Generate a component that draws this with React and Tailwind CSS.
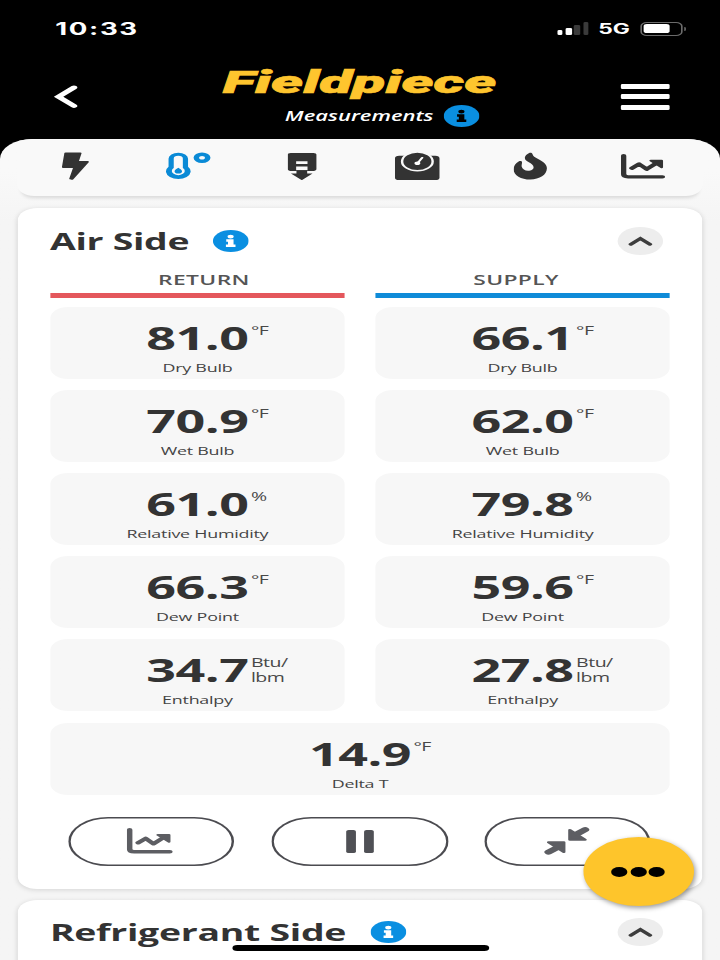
const airSide = [
  { label: "Dry Bulb", unit: "°F", ret: "81.0", sup: "66.1" },
  { label: "Wet Bulb", unit: "°F", ret: "70.9", sup: "62.0" },
  { label: "Relative Humidity", unit: "%", ret: "61.0", sup: "79.8" },
  { label: "Dew Point", unit: "°F", ret: "66.3", sup: "59.6" },
  { label: "Enthalpy", unit: "Btu/ lbm", ret: "34.7", sup: "27.8" },
];

function InfoIcon({ dark }) {
  return (
    <svg viewBox="0 0 22 22" className="h-[22px] w-[22px] shrink-0">
      <circle cx="11" cy="11" r="11" fill="#0a8fe1" />
      <g fill={dark ? "#000" : "#fff"}>
        <circle cx="10.9" cy="6.6" r="1.9" />
        <path d="M8.2 9.3h4.5v5.3h1.2v2.4H8v-2.4h1.3v-2.9H8.2z" />
      </g>
    </svg>
  );
}

function BoltIcon() {
  return (
    <svg viewBox="0 0 17 28" className="h-7 w-[17px]">
      <path
        d="M2.4 1.2h9L9.6 9.8h6.3L6.3 27l-.9-.4L7.9 15.2H.9z"
        fill="#333"
        stroke="#333"
        strokeWidth="1.6"
        strokeLinejoin="round"
      />
    </svg>
  );
}

function ThermometerIcon() {
  return (
    <svg viewBox="0 0 28 28" className="h-7 w-7">
      <path
        d="M1.7 6.8a6 6 0 0 1 12 0v8a7.6 7.6 0 1 1-12 0z"
        fill="#0a8ad6"
      />
      <path
        d="M4.9 6.6a2.8 2.8 0 0 1 5.6 0v9.5a4 4 0 1 1-5.6 0z"
        fill="#f9f9f9"
      />
      <path d="M7.7 15.8c.8 1 2.3 1.9 2.3 3.5a2.3 2.3 0 0 1-4.6 0c0-1.6 1.5-2.5 2.3-3.5z" fill="#0a8ad6" />
      <circle cx="22.3" cy="5.7" r="3.5" fill="none" stroke="#0a8ad6" strokeWidth="3.4" />
    </svg>
  );
}

function FilterIcon() {
  return (
    <svg viewBox="0 0 18 28" className="h-7 w-[18px]">
      <rect width="17.7" height="18" y="0.9" rx="1.8" fill="#333" />
      <path d="M5.2 9.3h7V12h-7zM5.2 14.6h7v3.6h-7z" fill="#f9f9f9" />
      <path d="M5.4 18.2h6.6v3.2h3.3L8.7 28.2 2 21.4h3.4z" fill="#333" />
    </svg>
  );
}

function GaugeIcon() {
  return (
    <svg viewBox="0 0 28 28" className="h-7 w-7">
      <rect y="3.8" width="27.4" height="24.2" rx="2.6" fill="#333" />
      <circle cx="13.8" cy="9.4" r="9.4" fill="#333" stroke="#f9f9f9" strokeWidth="1.5" />
      <path d="M16.8 5.7 14 11" stroke="#fff" strokeWidth="1.5" strokeLinecap="round" />
      <circle cx="13.8" cy="11.3" r="1.8" fill="#fff" />
    </svg>
  );
}

function FlameIcon() {
  return (
    <svg viewBox="0 0 21 28" className="h-7 w-[21px]">
      <path
        d="M9.6.9c.8-.6 1.8 0 2 1 .3 2 1.5 3.500 3.500 5 3 2.400 5.400 5.100 5.400 9.400 0 6.500-4.500 11.200-10.200 11.200S0 23 0 17.400c0-3.600 1.200-6.200 3.100-7.900.9-.8 2.100-.4 2.100.8 0 1.500-.4 3-.2 4.500.3 2.400 1.900 3.900 3.900 3.900s3.400-1.500 3.400-3.500c0-2.200-1.400-3.500-2.900-4.900C7.900 8.900 6.900 7.900 6.900 5.800c0-2.100 1.300-3.800 2.700-4.900z"
        fill="#333"
      />
    </svg>
  );
}

function TrendIcon({ color, className }) {
  return (
    <svg viewBox="0 0 27.5 25" className={className} fill="none" stroke={color} strokeLinecap="round" strokeLinejoin="round">
      <path d="M1.7 1.7v18.4q0 2.7 2.7 2.7h21.2" strokeWidth="3.3" />
      <path d="M6.8 14.2l4.400-4.200 4.700 5.200 5.600-5.700" strokeWidth="3.3" />
      <path d="M18.4 6.7h6.7v6.600z" strokeWidth="1.7" fill={color} />
    </svg>
  );
}

function CollapseIcon() {
  return (
    <svg viewBox="0 0 30 30" className="h-[30px] w-[30px]" fill="#5d5e63" stroke="#5d5e63" strokeLinecap="round" strokeLinejoin="round">
      <path d="M26 3.600l-5.600 4.900M3.500 26.200l5.600-4.900" strokeWidth="5" />
      <path d="M16.600 4v9.700h9.400zM12.900 26v-9.700H3.500z" strokeWidth="2" />
    </svg>
  );
}

function ChevronUp() {
  return (
    <button className="flex h-[27.5px] w-[27.5px] items-center justify-center rounded-full bg-[#ededed]">
      <svg viewBox="0 0 16 10" className="h-[10px] w-4" fill="none">
        <path d="M2.2 8.2 8 2.5l5.8 5.7" stroke="#3d3d3d" strokeWidth="2.9" strokeLinecap="round" />
      </svg>
    </button>
  );
}

function Reading({ value, unit, label }) {
  return (
    <div className="flex h-[72px] flex-col items-center rounded-[11px] bg-[#f7f7f7] pt-[9px]">
      <div className="relative text-[32px] leading-[44px] font-bold tracking-[-0.3px] text-[#333]">
        {value}
        <span className="absolute top-[7px] left-full ml-[1.5px] w-9 text-[12px] leading-[15px] font-medium tracking-[-0.3px] text-[#484848]">
          {unit}
        </span>
      </div>
      <div className="text-[11px] leading-[16px] font-medium tracking-[-0.15px] text-[#444]">{label}</div>
    </div>
  );
}

function SectionTitle({ title }) {
  return (
    <div className="flex h-[28px] items-center justify-between pr-[4.5px]">
      <div className="flex items-center gap-[15px]">
        <h2 className="text-[23px] leading-7 font-bold tracking-[-0.17px] text-[#333]">{title}</h2>
        <InfoIcon />
      </div>
      <ChevronUp />
    </div>
  );
}

function StatusBar() {
  return (
    <div className="flex h-[57px] items-center justify-between pr-[21px] pl-[34px] font-['Inter',sans-serif] text-white">
      <span className="pt-[2px] text-[17px] font-bold tracking-[1px]">10:33</span>
      <div className="flex items-center gap-[6px]">
        <div className="flex items-end gap-[1.8px]">
          <i className="h-[5px] w-[3.4px] rounded-[1px] bg-white" />
          <i className="h-[7px] w-[3.4px] rounded-[1px] bg-white" />
          <i className="h-[10px] w-[3.4px] rounded-[1px] bg-[#3a3a3a]" />
          <i className="h-[13px] w-[3.4px] rounded-[1px] bg-[#3a3a3a]" />
        </div>
        <span className="text-[14px] font-bold">5G</span>
        <div className="flex items-center gap-[1px]">
          <div className="h-[14px] w-[26px] rounded-[4px] border border-[#6b6b6b] p-[1.5px]">
            <div className="h-full w-4 rounded-[2px] bg-white" />
          </div>
          <i className="h-1 w-[1.5px] rounded-r bg-[#6b6b6b]" />
        </div>
      </div>
    </div>
  );
}

function Header() {
  return (
    <header className="h-[139px] bg-black text-white">
      <StatusBar />
      <div className="flex justify-between pr-[31px] pl-[33px]">
        <svg viewBox="0 0 15 24" className="mt-[28px] h-6 w-[15px]" fill="none">
          <path d="M12.5 2.5 3 11.7l9.5 9.2" stroke="#fff" strokeWidth="4" strokeLinecap="round" />
        </svg>
        <div className="ml-[12px] flex flex-col items-center">
          <div className="mt-[7px] h-[41px] scale-x-[1.165] font-['Roboto',sans-serif] text-[32px] leading-[36px] font-black whitespace-nowrap text-[#fec52e] italic [-webkit-text-stroke:0.6px_#fec52e]">
            Fieldpiece
          </div>
          <div className="ml-[28px] flex items-center gap-[6px]">
            <span className="text-[13.5px] leading-[22px] font-semibold italic">Measurements</span>
            <InfoIcon dark />
          </div>
        </div>
        <div className="mt-[26.5px] flex w-[30px] flex-col gap-[5.7px]">
          <i className="h-[5px] rounded-[1px] bg-white" />
          <i className="h-[5px] rounded-[1px] bg-white" />
          <i className="h-[5px] rounded-[1px] bg-white" />
        </div>
      </div>
    </header>
  );
}

function TabBar() {
  return (
    <nav className="mx-[11px] flex h-[57px] items-start rounded-b-[10px] bg-[#f9f9f9] pt-[13px] pl-[27px] shadow-[0_4px_3px_-2px_rgba(0,0,0,0.12)]">
      <BoltIcon />
      <div className="ml-[47px]">
        <ThermometerIcon />
      </div>
      <div className="ml-[47px]">
        <FilterIcon />
      </div>
      <div className="ml-[47.5px]">
        <GaugeIcon />
      </div>
      <div className="ml-[45.5px]">
        <FlameIcon />
      </div>
      <div className="mt-[2px] ml-[45px]">
        <TrendIcon color="#333" className="h-[25px] w-[27.5px]" />
      </div>
    </nav>
  );
}

const pill = "flex h-[48.5px] items-center justify-center rounded-full shadow-[inset_0_0_0_1.5px_#4b4b50]";

export default function App() {
  return (
    <div className="h-[960px] w-[720px] overflow-hidden bg-black">
      {/* the 443px wide phone layout fills the full width */}
      <div className="relative h-[960px] w-[443px] origin-left scale-x-[1.6253] overflow-hidden font-['Open_Sans',sans-serif]">
        <Header />
        <main className="h-[821px] overflow-hidden rounded-t-[20px] bg-linear-to-b from-[#f9f9f9] from-4% to-[#f5f5f5] to-10%">
          <TabBar />

          <section className="mx-[11px] mt-3 h-[681px] rounded-[12px] bg-white px-[19.7px] pt-[19px] shadow-[0_1px_4px_rgba(0,0,0,0.13)]">
            <SectionTitle title="Air Side" />
            <div className="mt-[15px] grid grid-cols-2 gap-x-[18.5px] text-center text-[14px] leading-[20px] font-semibold tracking-[0.25px] text-[#555]">
              <div className="border-b-[5px] border-[#e4575c] pb-[3px] pl-2">RETURN</div>
              <div className="border-b-[5px] border-[#0f8bd8] pr-2 pb-[3px]">SUPPLY</div>
            </div>
            <div className="mt-[9px] grid grid-cols-2 gap-x-[18.5px] gap-y-[11px]">
              {airSide.map((row) => [
                <Reading key={row.label + "r"} value={row.ret} unit={row.unit} label={row.label} />,
                <Reading key={row.label + "s"} value={row.sup} unit={row.unit} label={row.label} />,
              ])}
            </div>
            <div className="mt-3">
              <Reading value="14.9" unit="°F" label="Delta T" />
            </div>
            <div className="mt-[22px] flex pl-[11px]">
              <button className={pill + " w-[102px]"}>
                <TrendIcon color="#5d5e63" className="h-[26px] w-[28.5px]" />
              </button>
              <button className={pill + " ml-[23px] w-[109px] gap-[5px]"}>
                <i className="h-[23px] w-[6px] rounded-[1.5px] bg-[#4f5055]" />
                <i className="h-[23px] w-[6px] rounded-[1.5px] bg-[#4f5055]" />
              </button>
              <button className={pill + " ml-[22px] w-[102px]"}>
                <CollapseIcon />
              </button>
            </div>
          </section>

          <section className="mx-[11px] mt-[11px] h-[100px] rounded-[12px] bg-white px-[19.7px] pt-[18px] shadow-[0_1px_4px_rgba(0,0,0,0.13)]">
            <SectionTitle title="Refrigerant Side" />
          </section>
        </main>

        <button className="absolute top-[837px] left-[358.5px] flex h-[69px] w-[68.5px] items-center justify-center gap-[1.7px] rounded-full bg-[#fec52b] shadow-[1px_2px_4px_rgba(0,0,0,0.4)]">
          <i className="h-[10px] w-[10px] rounded-full bg-black" />
          <i className="h-[10px] w-[10px] rounded-full bg-black" />
          <i className="h-[10px] w-[10px] rounded-full bg-black" />
        </button>
        <div className="absolute top-[945px] left-[143px] h-[6px] w-[157.5px] rounded-full bg-black" />
      </div>
    </div>
  );
}
